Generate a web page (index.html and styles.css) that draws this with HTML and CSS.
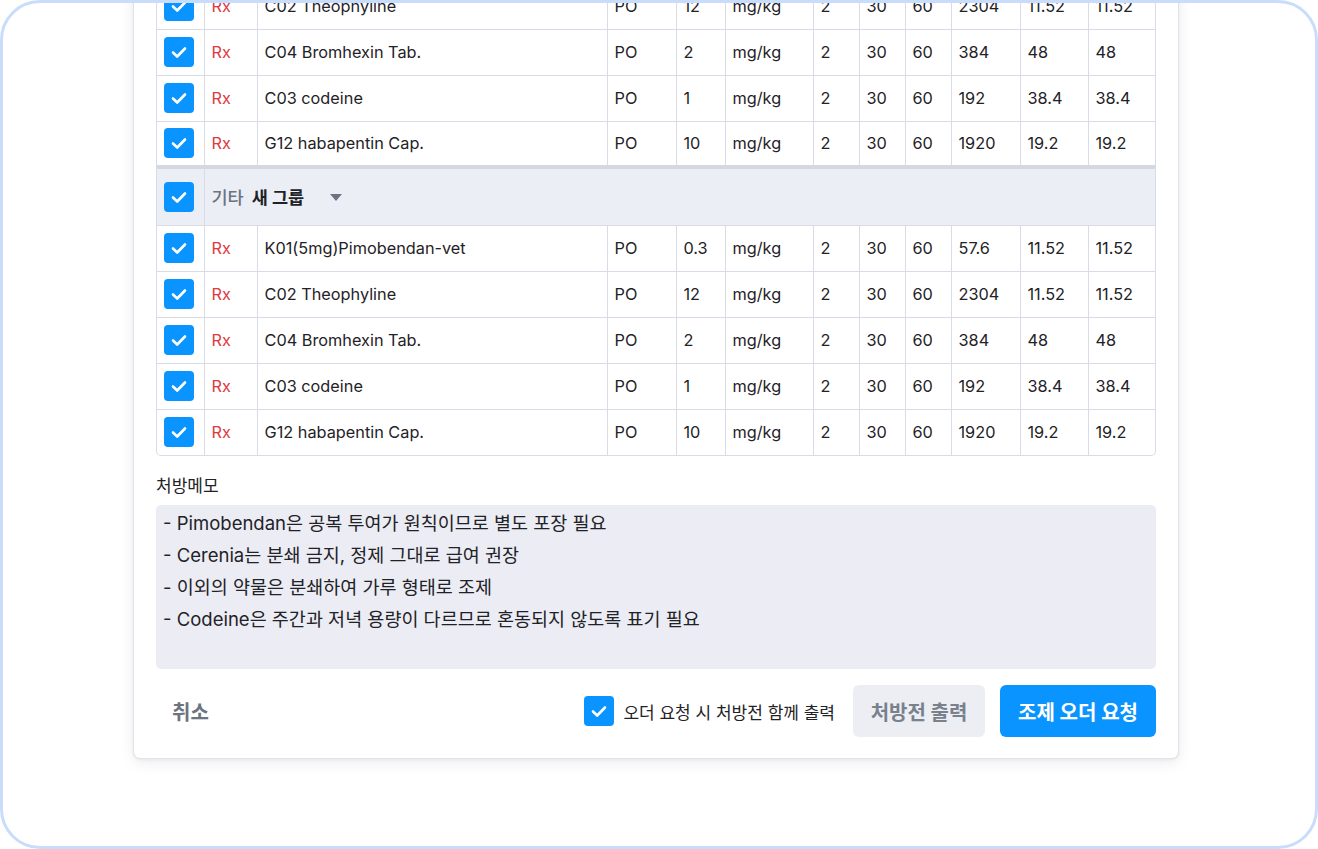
FILE: index.html
```html
<!DOCTYPE html>
<html lang="ko">
<head>
<meta charset="utf-8">
<title>조제 오더</title>
<link rel="stylesheet" href="styles.css">
</head>
<body>
<div class="frame">
  <div class="modal">
    <div class="table-wrap">
      <table class="rx-table">
        <colgroup>
          <col style="width:47px"><col style="width:53px"><col style="width:350px"><col style="width:69px"><col style="width:49px"><col style="width:88px"><col style="width:46px"><col style="width:46px"><col style="width:46px"><col style="width:69px"><col style="width:68px"><col style="width:68px">
        </colgroup>
        <tbody>
          <tr><td class="c-chk"><span class="chk"><svg viewBox="0 0 30 30"><polyline points="9,15.5 13.2,19.5 21,11.5"/></svg></span></td><td class="rx">Rx</td><td>C02 Theophyline</td><td>PO</td><td>12</td><td>mg/kg</td><td>2</td><td>30</td><td>60</td><td>2304</td><td>11.52</td><td>11.52</td></tr>
          <tr><td class="c-chk"><span class="chk"><svg viewBox="0 0 30 30"><polyline points="9,15.5 13.2,19.5 21,11.5"/></svg></span></td><td class="rx">Rx</td><td>C04 Bromhexin Tab.</td><td>PO</td><td>2</td><td>mg/kg</td><td>2</td><td>30</td><td>60</td><td>384</td><td>48</td><td>48</td></tr>
          <tr><td class="c-chk"><span class="chk"><svg viewBox="0 0 30 30"><polyline points="9,15.5 13.2,19.5 21,11.5"/></svg></span></td><td class="rx">Rx</td><td>C03 codeine</td><td>PO</td><td>1</td><td>mg/kg</td><td>2</td><td>30</td><td>60</td><td>192</td><td>38.4</td><td>38.4</td></tr>
          <tr><td class="c-chk"><span class="chk"><svg viewBox="0 0 30 30"><polyline points="9,15.5 13.2,19.5 21,11.5"/></svg></span></td><td class="rx">Rx</td><td>G12 habapentin Cap.</td><td>PO</td><td>10</td><td>mg/kg</td><td>2</td><td>30</td><td>60</td><td>1920</td><td>19.2</td><td>19.2</td></tr>
          <tr class="group"><td class="c-chk"><span class="chk"><svg viewBox="0 0 30 30"><polyline points="9,15.5 13.2,19.5 21,11.5"/></svg></span></td><td colspan="11"><span class="g-cat">기타</span><span class="g-name">새 그룹</span><svg class="caret" viewBox="0 0 12 8"><polygon points="0,0 12,0 6,7"/></svg></td></tr>
          <tr><td class="c-chk"><span class="chk"><svg viewBox="0 0 30 30"><polyline points="9,15.5 13.2,19.5 21,11.5"/></svg></span></td><td class="rx">Rx</td><td>K01(5mg)Pimobendan-vet</td><td>PO</td><td>0.3</td><td>mg/kg</td><td>2</td><td>30</td><td>60</td><td>57.6</td><td>11.52</td><td>11.52</td></tr>
          <tr><td class="c-chk"><span class="chk"><svg viewBox="0 0 30 30"><polyline points="9,15.5 13.2,19.5 21,11.5"/></svg></span></td><td class="rx">Rx</td><td>C02 Theophyline</td><td>PO</td><td>12</td><td>mg/kg</td><td>2</td><td>30</td><td>60</td><td>2304</td><td>11.52</td><td>11.52</td></tr>
          <tr><td class="c-chk"><span class="chk"><svg viewBox="0 0 30 30"><polyline points="9,15.5 13.2,19.5 21,11.5"/></svg></span></td><td class="rx">Rx</td><td>C04 Bromhexin Tab.</td><td>PO</td><td>2</td><td>mg/kg</td><td>2</td><td>30</td><td>60</td><td>384</td><td>48</td><td>48</td></tr>
          <tr><td class="c-chk"><span class="chk"><svg viewBox="0 0 30 30"><polyline points="9,15.5 13.2,19.5 21,11.5"/></svg></span></td><td class="rx">Rx</td><td>C03 codeine</td><td>PO</td><td>1</td><td>mg/kg</td><td>2</td><td>30</td><td>60</td><td>192</td><td>38.4</td><td>38.4</td></tr>
          <tr><td class="c-chk"><span class="chk"><svg viewBox="0 0 30 30"><polyline points="9,15.5 13.2,19.5 21,11.5"/></svg></span></td><td class="rx">Rx</td><td>G12 habapentin Cap.</td><td>PO</td><td>10</td><td>mg/kg</td><td>2</td><td>30</td><td>60</td><td>1920</td><td>19.2</td><td>19.2</td></tr>
        </tbody>
      </table>
    </div>

    <div class="memo-label">처방메모</div>
    <div class="memo">
      <p>- Pimobendan은 공복 투여가 원칙이므로 별도 포장 필요</p>
      <p>- Cerenia는 분쇄 금지, 정제 그대로 급여 권장</p>
      <p>- 이외의 약물은 분쇄하여 가루 형태로 조제</p>
      <p>- Codeine은 주간과 저녁 용량이 다르므로 혼동되지 않도록 표기 필요</p>
    </div>

    <div class="footer">
      <button class="btn-cancel">취소</button>
      <div class="footer-right">
        <label class="print-opt"><span class="chk"><svg viewBox="0 0 30 30"><polyline points="9,15.5 13.2,19.5 21,11.5"/></svg></span>오더 요청 시 처방전 함께 출력</label>
        <button class="btn-secondary">처방전 출력</button>
        <button class="btn-primary">조제 오더 요청</button>
      </div>
    </div>
  </div>
</div>
</body>
</html>
```

FILE: styles.css
```css
* { box-sizing: border-box; }

html, body {
  margin: 0;
  padding: 0;
  background: #ffffff;
}

body {
  font-family: Inter, "Noto Sans CJK KR", sans-serif;
  color: #1f2226;
}

.frame {
  width: 1318px;
  height: 849px;
  border: 3px solid #c8ddfb;
  border-radius: 40px;
  overflow: hidden;
  background: #ffffff;
  padding-left: 130px;
}

.modal {
  width: 1046px;
  margin-top: -20px;
  padding: 0 22px 21px 22px;
  background: #ffffff;
  border: 1px solid #e2e3ea;
  border-top: none;
  border-radius: 0 0 7px 7px;
  box-shadow: 0 4px 14px rgba(30, 35, 60, 0.08), 0 1px 3px rgba(30, 35, 60, 0.06);
}

.table-wrap {
  width: 1000px;
  border: 1px solid #d9dbe7;
  border-top: none;
  border-radius: 0 0 5px 5px;
  overflow: hidden;
}

.rx-table {
  width: 998px;
  border-collapse: collapse;
  table-layout: fixed;
  font-size: 16.3px;
}

.rx-table td {
  height: 46px;
  padding: 0 7px;
  border-right: 1px solid #d9dbe7;
  border-bottom: 1px solid #d9dbe7;
  white-space: nowrap;
  vertical-align: middle;
  color: #1f2226;
}

.rx-table td:last-child { border-right: none; }
.rx-table tr:last-child td { border-bottom: none; }

.rx-table td.c-chk {
  padding: 0 0 0 7px;
  line-height: 0;
}

.rx-table td.rx { color: #e0393e; }

.chk {
  display: inline-block;
  width: 30px;
  height: 30px;
  border-radius: 4px;
  background: #0a94ff;
  line-height: 0;
  flex: none;
}

.chk svg {
  width: 30px;
  height: 30px;
  fill: none;
  stroke: #ffffff;
  stroke-width: 2.6;
  stroke-linecap: round;
  stroke-linejoin: round;
}

.rx-table tr.group td {
  height: 58px;
  background: #eceef5;
  border-top: 4px solid #d6d8e1;
}

.g-cat {
  color: #6b7480;
  font-size: 17.5px;
  font-weight: 500;
  margin-right: 8px;
}

.g-name {
  font-size: 17.5px;
  font-weight: 700;
  color: #1f2226;
}

.caret {
  width: 12px;
  height: 8px;
  margin-left: 26px;
  fill: #6b7480;
  vertical-align: 2px;
}

.memo-label {
  margin-top: 19px;
  font-size: 17px;
  line-height: 22px;
  color: #1f2226;
}

.memo {
  margin-top: 8px;
  height: 164px;
  padding: 2px 7px;
  background: #ebecf4;
  border-radius: 5px;
}

.memo p {
  margin: 0;
  font-size: 18.5px;
  line-height: 32px;
  color: #1f2226;
}

.footer {
  margin-top: 16px;
  display: flex;
  align-items: center;
  justify-content: space-between;
}

button {
  font-family: inherit;
  border: none;
  cursor: pointer;
}

.btn-cancel {
  background: transparent;
  color: #6b7480;
  font-size: 20px;
  font-weight: 700;
  padding: 0 16px;
  height: 52px;
}

.footer-right {
  display: flex;
  align-items: center;
}

.print-opt {
  display: flex;
  align-items: center;
  gap: 9px;
  font-size: 17px;
  color: #1f2226;
  margin-right: 18px;
}

.btn-secondary {
  width: 132px;
  height: 52px;
  border-radius: 6px;
  background: #eceef4;
  color: #78818c;
  font-size: 20px;
  font-weight: 700;
  margin-right: 15px;
}

.btn-primary {
  width: 156px;
  height: 52px;
  border-radius: 6px;
  background: #0a94ff;
  color: #ffffff;
  font-size: 20px;
  font-weight: 700;
}
```
